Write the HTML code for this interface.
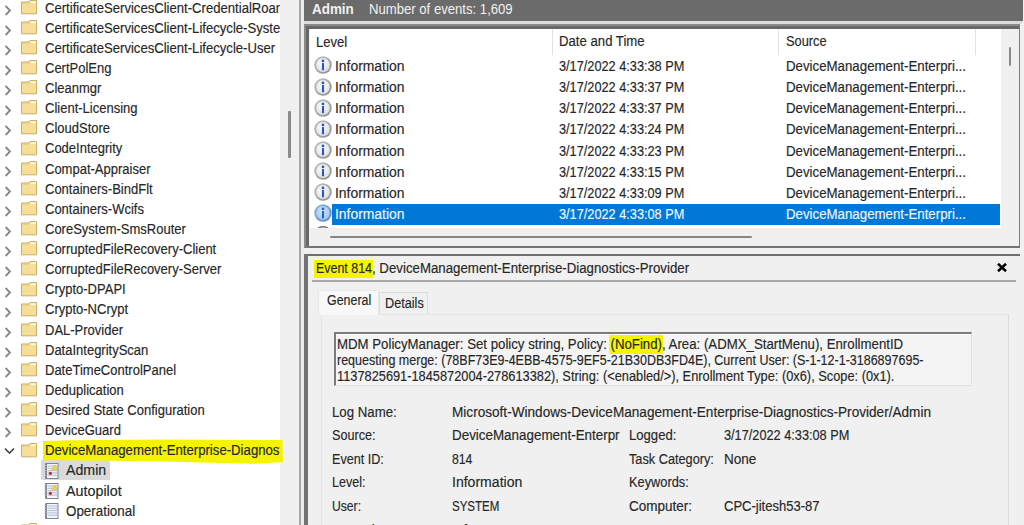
<!DOCTYPE html>
<html><head><meta charset="utf-8">
<style>
*{margin:0;padding:0;box-sizing:border-box}
html,body{width:1024px;height:525px;overflow:hidden;background:#f0f0f0;font-family:"Liberation Sans",sans-serif;font-size:14px;color:#222}
.tx{position:absolute;font-size:14px;line-height:16px;white-space:nowrap;transform-origin:0 0;color:#262626;-webkit-text-stroke:0.15px currentColor}
#tree{position:absolute;left:0;top:0;width:280px;height:525px;background:#fff;overflow:hidden}
.ti{position:absolute;left:0;width:60px;height:20px}
.ch{position:absolute;left:4px;top:5px}
.chd{position:absolute;left:3.5px;top:4px}
.fd{position:absolute;left:21px;top:0px}
.lg{position:absolute;left:44px;top:0px}
.yhl{position:absolute;left:43.7px;top:441.6px;width:238px;height:17.8px;background:#f5f500;border-radius:2px 4px 3px 2px}
.tsel{position:absolute;left:40.9px;width:69.6px;height:19.6px;background:#dadada}
#tscroll{position:absolute;left:280px;top:0;width:19px;height:525px;background:#f0f0f0}
#tthumb{position:absolute;left:288px;top:111px;width:2.6px;height:47px;background:#8a8a8a;border-radius:1px}
#vline1{position:absolute;left:298.8px;top:0;width:2px;height:525px;background:#a9a9a9}
#vline2{position:absolute;left:300.8px;top:0;width:3px;height:525px;background:#ececec}
#hdr{position:absolute;left:303.8px;top:0;width:719px;height:21.2px;background:#6b6b6b}
#hdrgap{position:absolute;left:303.8px;top:21.2px;width:718.5px;height:2.4px;background:#dcdcdc}
#lframe{position:absolute;left:303.8px;top:23.8px;width:716.2px;height:224.2px;background:#f0f0f0;border-top:2.6px solid #8a8a8a;border-left:2.6px solid #8a8a8a;border-right:1.4px solid #7a7a7a;border-bottom:2px solid #747474}
#lframe2{position:absolute;left:306.4px;top:26.4px;width:3.1px;height:219.6px;background:#686868}
#lframe3{position:absolute;left:306.4px;top:26.4px;width:712.2px;height:2.4px;background:#686868}
#list{position:absolute;left:309.5px;top:28.8px;width:691.5px;height:198.9px;background:#fff}
.colsep{position:absolute;top:28.5px;width:1px;height:26px;background:#e3e3e3}
.ei{position:absolute;left:313.8px;width:18px;height:18px}
.ii{position:absolute;left:0;top:0}
#selrow{position:absolute;left:331.6px;top:203.7px;width:668px;height:21.1px;background:#0078d7}
#evclip{position:absolute;left:0;top:0;width:1001px;height:227.7px;overflow:hidden}
#vtrack{position:absolute;left:1001px;top:28.8px;width:17.6px;height:198.9px;background:#f0f0f0}
#vthumb{position:absolute;left:1008.6px;top:47.3px;width:2.4px;height:19px;background:#8a8a8a;border-radius:1px}
#hthumb{position:absolute;left:329.5px;top:236px;width:422px;height:2.2px;background:#858585;border-radius:1px}
#dtop{position:absolute;left:303.8px;top:254.3px;width:716.2px;height:2px;background:#6f6f6f}
#dleft{position:absolute;left:303.8px;top:254.3px;width:4px;height:271px;background:#737373}
.yb{background:#f5f500;display:inline-block;line-height:18px;padding:0 2px 0 2px;margin-left:-2px;margin-right:-2px}
.yb2{background:#f5f500;display:inline-block;line-height:19px;padding:0 1px;margin:0 -1px}
#close{position:absolute;left:997px;top:263.8px}
#dsep{position:absolute;left:311.6px;top:280px;width:704.4px;height:2px;background:#a9a9a9}
#tabpanel{position:absolute;left:321px;top:313.5px;width:687.5px;height:230px;border-top:1px solid #e4e4e4;border-left:1px solid #e4e4e4;border-right:1px solid #dcdcdc;background:#f0f0f0}
#tabgen{position:absolute;left:317.5px;top:290px;width:61px;height:25px;background:#f8f8f8;border:1px solid #e8e8e8;border-bottom:none}
#tabdet{position:absolute;left:378.8px;top:291.6px;width:49.2px;height:22px;background:#f0f0f0;border:1px solid #dcdcdc;border-bottom:none}
#msg{position:absolute;left:333.8px;top:332.4px;width:638.4px;height:53.6px;background:#f4f4f4;border-top:2px solid #7c7c7c;border-left:2px solid #7c7c7c;border-right:1px solid #e2e2e2;border-bottom:1px solid #e2e2e2;box-shadow:inset 1px 1px 0 #fafafa}
#rscroll{position:absolute;left:1020px;top:0;width:4px;height:525px;background:#f0f0f0}
.tx.hd{-webkit-text-stroke:0}
</style></head><body>
<div id="tree">
<div class="ti" style="top:-0.30px"><svg class="ch" width="8" height="11" viewBox="0 0 8 11"><path d="M1.6 1 L6 5.5 L1.6 10" fill="none" stroke="#858585" stroke-width="1.8"/></svg><svg class="fd" width="16" height="15" viewBox="0 0 16 15"><path d="M0.5 2 H8 L9 0.5 H15.5 V13.8 H0.5 Z" fill="#f6de98" stroke="#c9ae6c" stroke-width="1"/><rect x="9.3" y="1.2" width="5.6" height="2" fill="#fdf5dc"/><path d="M1 3.2 H8.5 L9.3 2.7" fill="none" stroke="#e2c97e" stroke-width="0.8"/></svg></div>
<div class="ti" style="top:19.83px"><svg class="ch" width="8" height="11" viewBox="0 0 8 11"><path d="M1.6 1 L6 5.5 L1.6 10" fill="none" stroke="#858585" stroke-width="1.8"/></svg><svg class="fd" width="16" height="15" viewBox="0 0 16 15"><path d="M0.5 2 H8 L9 0.5 H15.5 V13.8 H0.5 Z" fill="#f6de98" stroke="#c9ae6c" stroke-width="1"/><rect x="9.3" y="1.2" width="5.6" height="2" fill="#fdf5dc"/><path d="M1 3.2 H8.5 L9.3 2.7" fill="none" stroke="#e2c97e" stroke-width="0.8"/></svg></div>
<div class="ti" style="top:39.96px"><svg class="ch" width="8" height="11" viewBox="0 0 8 11"><path d="M1.6 1 L6 5.5 L1.6 10" fill="none" stroke="#858585" stroke-width="1.8"/></svg><svg class="fd" width="16" height="15" viewBox="0 0 16 15"><path d="M0.5 2 H8 L9 0.5 H15.5 V13.8 H0.5 Z" fill="#f6de98" stroke="#c9ae6c" stroke-width="1"/><rect x="9.3" y="1.2" width="5.6" height="2" fill="#fdf5dc"/><path d="M1 3.2 H8.5 L9.3 2.7" fill="none" stroke="#e2c97e" stroke-width="0.8"/></svg></div>
<div class="ti" style="top:60.09px"><svg class="ch" width="8" height="11" viewBox="0 0 8 11"><path d="M1.6 1 L6 5.5 L1.6 10" fill="none" stroke="#858585" stroke-width="1.8"/></svg><svg class="fd" width="16" height="15" viewBox="0 0 16 15"><path d="M0.5 2 H8 L9 0.5 H15.5 V13.8 H0.5 Z" fill="#f6de98" stroke="#c9ae6c" stroke-width="1"/><rect x="9.3" y="1.2" width="5.6" height="2" fill="#fdf5dc"/><path d="M1 3.2 H8.5 L9.3 2.7" fill="none" stroke="#e2c97e" stroke-width="0.8"/></svg></div>
<div class="ti" style="top:80.22px"><svg class="ch" width="8" height="11" viewBox="0 0 8 11"><path d="M1.6 1 L6 5.5 L1.6 10" fill="none" stroke="#858585" stroke-width="1.8"/></svg><svg class="fd" width="16" height="15" viewBox="0 0 16 15"><path d="M0.5 2 H8 L9 0.5 H15.5 V13.8 H0.5 Z" fill="#f6de98" stroke="#c9ae6c" stroke-width="1"/><rect x="9.3" y="1.2" width="5.6" height="2" fill="#fdf5dc"/><path d="M1 3.2 H8.5 L9.3 2.7" fill="none" stroke="#e2c97e" stroke-width="0.8"/></svg></div>
<div class="ti" style="top:100.35px"><svg class="ch" width="8" height="11" viewBox="0 0 8 11"><path d="M1.6 1 L6 5.5 L1.6 10" fill="none" stroke="#858585" stroke-width="1.8"/></svg><svg class="fd" width="16" height="15" viewBox="0 0 16 15"><path d="M0.5 2 H8 L9 0.5 H15.5 V13.8 H0.5 Z" fill="#f6de98" stroke="#c9ae6c" stroke-width="1"/><rect x="9.3" y="1.2" width="5.6" height="2" fill="#fdf5dc"/><path d="M1 3.2 H8.5 L9.3 2.7" fill="none" stroke="#e2c97e" stroke-width="0.8"/></svg></div>
<div class="ti" style="top:120.48px"><svg class="ch" width="8" height="11" viewBox="0 0 8 11"><path d="M1.6 1 L6 5.5 L1.6 10" fill="none" stroke="#858585" stroke-width="1.8"/></svg><svg class="fd" width="16" height="15" viewBox="0 0 16 15"><path d="M0.5 2 H8 L9 0.5 H15.5 V13.8 H0.5 Z" fill="#f6de98" stroke="#c9ae6c" stroke-width="1"/><rect x="9.3" y="1.2" width="5.6" height="2" fill="#fdf5dc"/><path d="M1 3.2 H8.5 L9.3 2.7" fill="none" stroke="#e2c97e" stroke-width="0.8"/></svg></div>
<div class="ti" style="top:140.61px"><svg class="ch" width="8" height="11" viewBox="0 0 8 11"><path d="M1.6 1 L6 5.5 L1.6 10" fill="none" stroke="#858585" stroke-width="1.8"/></svg><svg class="fd" width="16" height="15" viewBox="0 0 16 15"><path d="M0.5 2 H8 L9 0.5 H15.5 V13.8 H0.5 Z" fill="#f6de98" stroke="#c9ae6c" stroke-width="1"/><rect x="9.3" y="1.2" width="5.6" height="2" fill="#fdf5dc"/><path d="M1 3.2 H8.5 L9.3 2.7" fill="none" stroke="#e2c97e" stroke-width="0.8"/></svg></div>
<div class="ti" style="top:160.74px"><svg class="ch" width="8" height="11" viewBox="0 0 8 11"><path d="M1.6 1 L6 5.5 L1.6 10" fill="none" stroke="#858585" stroke-width="1.8"/></svg><svg class="fd" width="16" height="15" viewBox="0 0 16 15"><path d="M0.5 2 H8 L9 0.5 H15.5 V13.8 H0.5 Z" fill="#f6de98" stroke="#c9ae6c" stroke-width="1"/><rect x="9.3" y="1.2" width="5.6" height="2" fill="#fdf5dc"/><path d="M1 3.2 H8.5 L9.3 2.7" fill="none" stroke="#e2c97e" stroke-width="0.8"/></svg></div>
<div class="ti" style="top:180.87px"><svg class="ch" width="8" height="11" viewBox="0 0 8 11"><path d="M1.6 1 L6 5.5 L1.6 10" fill="none" stroke="#858585" stroke-width="1.8"/></svg><svg class="fd" width="16" height="15" viewBox="0 0 16 15"><path d="M0.5 2 H8 L9 0.5 H15.5 V13.8 H0.5 Z" fill="#f6de98" stroke="#c9ae6c" stroke-width="1"/><rect x="9.3" y="1.2" width="5.6" height="2" fill="#fdf5dc"/><path d="M1 3.2 H8.5 L9.3 2.7" fill="none" stroke="#e2c97e" stroke-width="0.8"/></svg></div>
<div class="ti" style="top:201.00px"><svg class="ch" width="8" height="11" viewBox="0 0 8 11"><path d="M1.6 1 L6 5.5 L1.6 10" fill="none" stroke="#858585" stroke-width="1.8"/></svg><svg class="fd" width="16" height="15" viewBox="0 0 16 15"><path d="M0.5 2 H8 L9 0.5 H15.5 V13.8 H0.5 Z" fill="#f6de98" stroke="#c9ae6c" stroke-width="1"/><rect x="9.3" y="1.2" width="5.6" height="2" fill="#fdf5dc"/><path d="M1 3.2 H8.5 L9.3 2.7" fill="none" stroke="#e2c97e" stroke-width="0.8"/></svg></div>
<div class="ti" style="top:221.13px"><svg class="ch" width="8" height="11" viewBox="0 0 8 11"><path d="M1.6 1 L6 5.5 L1.6 10" fill="none" stroke="#858585" stroke-width="1.8"/></svg><svg class="fd" width="16" height="15" viewBox="0 0 16 15"><path d="M0.5 2 H8 L9 0.5 H15.5 V13.8 H0.5 Z" fill="#f6de98" stroke="#c9ae6c" stroke-width="1"/><rect x="9.3" y="1.2" width="5.6" height="2" fill="#fdf5dc"/><path d="M1 3.2 H8.5 L9.3 2.7" fill="none" stroke="#e2c97e" stroke-width="0.8"/></svg></div>
<div class="ti" style="top:241.26px"><svg class="ch" width="8" height="11" viewBox="0 0 8 11"><path d="M1.6 1 L6 5.5 L1.6 10" fill="none" stroke="#858585" stroke-width="1.8"/></svg><svg class="fd" width="16" height="15" viewBox="0 0 16 15"><path d="M0.5 2 H8 L9 0.5 H15.5 V13.8 H0.5 Z" fill="#f6de98" stroke="#c9ae6c" stroke-width="1"/><rect x="9.3" y="1.2" width="5.6" height="2" fill="#fdf5dc"/><path d="M1 3.2 H8.5 L9.3 2.7" fill="none" stroke="#e2c97e" stroke-width="0.8"/></svg></div>
<div class="ti" style="top:261.39px"><svg class="ch" width="8" height="11" viewBox="0 0 8 11"><path d="M1.6 1 L6 5.5 L1.6 10" fill="none" stroke="#858585" stroke-width="1.8"/></svg><svg class="fd" width="16" height="15" viewBox="0 0 16 15"><path d="M0.5 2 H8 L9 0.5 H15.5 V13.8 H0.5 Z" fill="#f6de98" stroke="#c9ae6c" stroke-width="1"/><rect x="9.3" y="1.2" width="5.6" height="2" fill="#fdf5dc"/><path d="M1 3.2 H8.5 L9.3 2.7" fill="none" stroke="#e2c97e" stroke-width="0.8"/></svg></div>
<div class="ti" style="top:281.52px"><svg class="ch" width="8" height="11" viewBox="0 0 8 11"><path d="M1.6 1 L6 5.5 L1.6 10" fill="none" stroke="#858585" stroke-width="1.8"/></svg><svg class="fd" width="16" height="15" viewBox="0 0 16 15"><path d="M0.5 2 H8 L9 0.5 H15.5 V13.8 H0.5 Z" fill="#f6de98" stroke="#c9ae6c" stroke-width="1"/><rect x="9.3" y="1.2" width="5.6" height="2" fill="#fdf5dc"/><path d="M1 3.2 H8.5 L9.3 2.7" fill="none" stroke="#e2c97e" stroke-width="0.8"/></svg></div>
<div class="ti" style="top:301.65px"><svg class="ch" width="8" height="11" viewBox="0 0 8 11"><path d="M1.6 1 L6 5.5 L1.6 10" fill="none" stroke="#858585" stroke-width="1.8"/></svg><svg class="fd" width="16" height="15" viewBox="0 0 16 15"><path d="M0.5 2 H8 L9 0.5 H15.5 V13.8 H0.5 Z" fill="#f6de98" stroke="#c9ae6c" stroke-width="1"/><rect x="9.3" y="1.2" width="5.6" height="2" fill="#fdf5dc"/><path d="M1 3.2 H8.5 L9.3 2.7" fill="none" stroke="#e2c97e" stroke-width="0.8"/></svg></div>
<div class="ti" style="top:321.78px"><svg class="ch" width="8" height="11" viewBox="0 0 8 11"><path d="M1.6 1 L6 5.5 L1.6 10" fill="none" stroke="#858585" stroke-width="1.8"/></svg><svg class="fd" width="16" height="15" viewBox="0 0 16 15"><path d="M0.5 2 H8 L9 0.5 H15.5 V13.8 H0.5 Z" fill="#f6de98" stroke="#c9ae6c" stroke-width="1"/><rect x="9.3" y="1.2" width="5.6" height="2" fill="#fdf5dc"/><path d="M1 3.2 H8.5 L9.3 2.7" fill="none" stroke="#e2c97e" stroke-width="0.8"/></svg></div>
<div class="ti" style="top:341.91px"><svg class="ch" width="8" height="11" viewBox="0 0 8 11"><path d="M1.6 1 L6 5.5 L1.6 10" fill="none" stroke="#858585" stroke-width="1.8"/></svg><svg class="fd" width="16" height="15" viewBox="0 0 16 15"><path d="M0.5 2 H8 L9 0.5 H15.5 V13.8 H0.5 Z" fill="#f6de98" stroke="#c9ae6c" stroke-width="1"/><rect x="9.3" y="1.2" width="5.6" height="2" fill="#fdf5dc"/><path d="M1 3.2 H8.5 L9.3 2.7" fill="none" stroke="#e2c97e" stroke-width="0.8"/></svg></div>
<div class="ti" style="top:362.04px"><svg class="ch" width="8" height="11" viewBox="0 0 8 11"><path d="M1.6 1 L6 5.5 L1.6 10" fill="none" stroke="#858585" stroke-width="1.8"/></svg><svg class="fd" width="16" height="15" viewBox="0 0 16 15"><path d="M0.5 2 H8 L9 0.5 H15.5 V13.8 H0.5 Z" fill="#f6de98" stroke="#c9ae6c" stroke-width="1"/><rect x="9.3" y="1.2" width="5.6" height="2" fill="#fdf5dc"/><path d="M1 3.2 H8.5 L9.3 2.7" fill="none" stroke="#e2c97e" stroke-width="0.8"/></svg></div>
<div class="ti" style="top:382.17px"><svg class="ch" width="8" height="11" viewBox="0 0 8 11"><path d="M1.6 1 L6 5.5 L1.6 10" fill="none" stroke="#858585" stroke-width="1.8"/></svg><svg class="fd" width="16" height="15" viewBox="0 0 16 15"><path d="M0.5 2 H8 L9 0.5 H15.5 V13.8 H0.5 Z" fill="#f6de98" stroke="#c9ae6c" stroke-width="1"/><rect x="9.3" y="1.2" width="5.6" height="2" fill="#fdf5dc"/><path d="M1 3.2 H8.5 L9.3 2.7" fill="none" stroke="#e2c97e" stroke-width="0.8"/></svg></div>
<div class="ti" style="top:402.30px"><svg class="ch" width="8" height="11" viewBox="0 0 8 11"><path d="M1.6 1 L6 5.5 L1.6 10" fill="none" stroke="#858585" stroke-width="1.8"/></svg><svg class="fd" width="16" height="15" viewBox="0 0 16 15"><path d="M0.5 2 H8 L9 0.5 H15.5 V13.8 H0.5 Z" fill="#f6de98" stroke="#c9ae6c" stroke-width="1"/><rect x="9.3" y="1.2" width="5.6" height="2" fill="#fdf5dc"/><path d="M1 3.2 H8.5 L9.3 2.7" fill="none" stroke="#e2c97e" stroke-width="0.8"/></svg></div>
<div class="ti" style="top:422.43px"><svg class="ch" width="8" height="11" viewBox="0 0 8 11"><path d="M1.6 1 L6 5.5 L1.6 10" fill="none" stroke="#858585" stroke-width="1.8"/></svg><svg class="fd" width="16" height="15" viewBox="0 0 16 15"><path d="M0.5 2 H8 L9 0.5 H15.5 V13.8 H0.5 Z" fill="#f6de98" stroke="#c9ae6c" stroke-width="1"/><rect x="9.3" y="1.2" width="5.6" height="2" fill="#fdf5dc"/><path d="M1 3.2 H8.5 L9.3 2.7" fill="none" stroke="#e2c97e" stroke-width="0.8"/></svg></div>
<div class="ti" style="top:442.56px"><svg class="chd" width="11" height="8" viewBox="0 0 11 8"><path d="M1 1.5 L5.5 6 L10 1.5" fill="none" stroke="#444" stroke-width="1.6"/></svg><svg class="fd" width="16" height="15" viewBox="0 0 16 15"><path d="M0.5 2 H8 L9 0.5 H15.5 V13.8 H0.5 Z" fill="#f6de98" stroke="#c9ae6c" stroke-width="1"/><rect x="9.3" y="1.2" width="5.6" height="2" fill="#fdf5dc"/><path d="M1 3.2 H8.5 L9.3 2.7" fill="none" stroke="#e2c97e" stroke-width="0.8"/></svg></div>
<div class="tsel" style="top:460.4px"></div>
<div class="ti" style="top:462.69px"><svg class="lg" width="15" height="16" viewBox="0 0 15 16"><rect x="2" y="0.5" width="12" height="15" fill="#f2f5fa" stroke="#7c8496" stroke-width="1"/><rect x="1" y="0.5" width="2" height="15" fill="#7a8090"/><g stroke="#a9b5c9" stroke-width="0.9"><line x1="3.5" y1="3" x2="13.5" y2="3"/><line x1="3.5" y1="5.3" x2="13.5" y2="5.3"/><line x1="3.5" y1="7.6" x2="13.5" y2="7.6"/><line x1="3.5" y1="9.9" x2="13.5" y2="9.9"/><line x1="3.5" y1="12.2" x2="13.5" y2="12.2"/></g><g stroke="#c9ccd4" stroke-width="0.8"><line x1="0" y1="2.5" x2="2.5" y2="2.5"/><line x1="0" y1="5" x2="2.5" y2="5"/><line x1="0" y1="7.5" x2="2.5" y2="7.5"/><line x1="0" y1="10" x2="2.5" y2="10"/><line x1="0" y1="12.5" x2="2.5" y2="12.5"/></g><path d="M7.8 6.6 L10.6 1.8 L13.4 6.6 Z" fill="#f3d24c" stroke="#dcb52a" stroke-width="0.5"/><circle cx="6.4" cy="10.3" r="1.6" fill="#c8262c"/></svg></div>
<div class="ti" style="top:482.82px"><svg class="lg" width="15" height="16" viewBox="0 0 15 16"><rect x="2" y="0.5" width="12" height="15" fill="#f2f5fa" stroke="#7c8496" stroke-width="1"/><rect x="1" y="0.5" width="2" height="15" fill="#7a8090"/><g stroke="#a9b5c9" stroke-width="0.9"><line x1="3.5" y1="3" x2="13.5" y2="3"/><line x1="3.5" y1="5.3" x2="13.5" y2="5.3"/><line x1="3.5" y1="7.6" x2="13.5" y2="7.6"/><line x1="3.5" y1="9.9" x2="13.5" y2="9.9"/><line x1="3.5" y1="12.2" x2="13.5" y2="12.2"/></g><g stroke="#c9ccd4" stroke-width="0.8"><line x1="0" y1="2.5" x2="2.5" y2="2.5"/><line x1="0" y1="5" x2="2.5" y2="5"/><line x1="0" y1="7.5" x2="2.5" y2="7.5"/><line x1="0" y1="10" x2="2.5" y2="10"/><line x1="0" y1="12.5" x2="2.5" y2="12.5"/></g><path d="M7.8 6.6 L10.6 1.8 L13.4 6.6 Z" fill="#f3d24c" stroke="#dcb52a" stroke-width="0.5"/><circle cx="6.4" cy="10.3" r="1.6" fill="#c8262c"/></svg></div>
<div class="ti" style="top:502.95px"><svg class="lg" width="15" height="16" viewBox="0 0 15 16"><rect x="2" y="0.5" width="12" height="15" fill="#f2f5fa" stroke="#7c8496" stroke-width="1"/><rect x="1" y="0.5" width="2" height="15" fill="#7a8090"/><g stroke="#a9b5c9" stroke-width="0.9"><line x1="3.5" y1="3" x2="13.5" y2="3"/><line x1="3.5" y1="5.3" x2="13.5" y2="5.3"/><line x1="3.5" y1="7.6" x2="13.5" y2="7.6"/><line x1="3.5" y1="9.9" x2="13.5" y2="9.9"/><line x1="3.5" y1="12.2" x2="13.5" y2="12.2"/></g><g stroke="#c9ccd4" stroke-width="0.8"><line x1="0" y1="2.5" x2="2.5" y2="2.5"/><line x1="0" y1="5" x2="2.5" y2="5"/><line x1="0" y1="7.5" x2="2.5" y2="7.5"/><line x1="0" y1="10" x2="2.5" y2="10"/><line x1="0" y1="12.5" x2="2.5" y2="12.5"/></g></svg></div>
<div class="ti" style="top:523.08px"><svg class="ch" width="8" height="11" viewBox="0 0 8 11"><path d="M1.6 1 L6 5.5 L1.6 10" fill="none" stroke="#858585" stroke-width="1.8"/></svg><svg class="fd" width="16" height="15" viewBox="0 0 16 15"><path d="M0.5 2 H8 L9 0.5 H15.5 V13.8 H0.5 Z" fill="#f6de98" stroke="#c9ae6c" stroke-width="1"/><rect x="9.3" y="1.2" width="5.6" height="2" fill="#fdf5dc"/><path d="M1 3.2 H8.5 L9.3 2.7" fill="none" stroke="#e2c97e" stroke-width="0.8"/></svg></div>
<svg width="290" height="30" style="position:absolute;left:0;top:435px"><path d="M43 6 L70 5.2 L160 4.6 L282.5 5 L283 27 L255 28.7 L150 26.3 L43 25 Z" fill="#f4f400"/></svg>
<div style="position:absolute;left:0;top:0;width:279.5px;height:525px;overflow:hidden">
<div class="tx tr" style="left:45.2px;top:0px;transform:scaleX(0.9360)">CertificateServicesClient-CredentialRoaming</div>
<div class="tx tr" style="left:45.2px;top:20px;transform:scaleX(0.9360)">CertificateServicesClient-Lifecycle-System</div>
<div class="tx tr" style="left:45.2px;top:40px;transform:scaleX(0.9360)">CertificateServicesClient-Lifecycle-User</div>
<div class="tx tr" style="left:45.2px;top:60px;transform:scaleX(0.9286)">CertPolEng</div>
<div class="tx tr" style="left:45.2px;top:80px;transform:scaleX(0.9284)">Cleanmgr</div>
<div class="tx tr" style="left:45.2px;top:100px;transform:scaleX(0.9286)">Client-Licensing</div>
<div class="tx tr" style="left:45.2px;top:120px;transform:scaleX(0.9286)">CloudStore</div>
<div class="tx tr" style="left:45.2px;top:140px;transform:scaleX(0.9285)">CodeIntegrity</div>
<div class="tx tr" style="left:45.2px;top:161px;transform:scaleX(0.9286)">Compat-Appraiser</div>
<div class="tx tr" style="left:45.2px;top:181px;transform:scaleX(0.9286)">Containers-BindFlt</div>
<div class="tx tr" style="left:45.2px;top:201px;transform:scaleX(0.9285)">Containers-Wcifs</div>
<div class="tx tr" style="left:45.2px;top:221px;transform:scaleX(0.9286)">CoreSystem-SmsRouter</div>
<div class="tx tr" style="left:45.2px;top:241px;transform:scaleX(0.9286)">CorruptedFileRecovery-Client</div>
<div class="tx tr" style="left:45.2px;top:261px;transform:scaleX(0.9286)">CorruptedFileRecovery-Server</div>
<div class="tx tr" style="left:45.2px;top:281px;transform:scaleX(0.9286)">Crypto-DPAPI</div>
<div class="tx tr" style="left:45.2px;top:301px;transform:scaleX(0.9286)">Crypto-NCrypt</div>
<div class="tx tr" style="left:45.2px;top:322px;transform:scaleX(0.9286)">DAL-Provider</div>
<div class="tx tr" style="left:45.2px;top:342px;transform:scaleX(0.9285)">DataIntegrityScan</div>
<div class="tx tr" style="left:45.2px;top:362px;transform:scaleX(0.9286)">DateTimeControlPanel</div>
<div class="tx tr" style="left:45.2px;top:382px;transform:scaleX(0.9285)">Deduplication</div>
<div class="tx tr" style="left:45.2px;top:402px;transform:scaleX(0.9285)">Desired State Configuration</div>
<div class="tx tr" style="left:45.2px;top:422px;transform:scaleX(0.9287)">DeviceGuard</div>
<div class="tx tr" style="left:45.2px;top:442px;transform:scaleX(0.9416)">DeviceManagement-Enterprise-Diagnostics-Provider</div>
<div class="tx tr" style="left:66.4px;top:462px;transform:scaleX(1.0131)">Admin</div>
<div class="tx tr" style="left:66.4px;top:483px;transform:scaleX(1.0226)">Autopilot</div>
<div class="tx tr" style="left:66.4px;top:503px;transform:scaleX(0.9556)">Operational</div>
<div class="tx tr" style="left:45.2px;top:523px;transform:scaleX(0.9286)">Diagnosis-DPS</div>
</div>
</div>
<div id="tscroll"></div>
<div style="position:absolute;left:280px;top:435px;width:5px;height:30px;overflow:hidden"><svg width="290" height="30" style="position:absolute;left:-280px;top:0"><path d="M43 6 L70 5.2 L160 4.6 L282.5 5 L283 27 L255 28.7 L150 26.3 L43 25 Z" fill="#f4f400"/></svg></div>
<div id="tthumb"></div>
<div id="vline1"></div>
<div id="vline2"></div>

<div id="rscroll"></div>
<div id="hdr"></div>
<div id="hdrgap"></div>
<div id="lframe"></div>
<div id="list"></div>
<div id="lframe2"></div>
<div id="lframe3"></div>
<div class="colsep" style="left:551.5px"></div>
<div class="colsep" style="left:777.8px"></div>
<div class="colsep" style="left:975.4px"></div>
<div id="evclip">
<div id="selrow"></div>
<div class="ei" style="top:56.40px"><svg class="ii" width="18" height="18" viewBox="0 0 18 18"><defs><linearGradient id="r0" x1="0" y1="0" x2="1" y2="1"><stop offset="0" stop-color="#c4c4c4"/><stop offset="1" stop-color="#8a8a8a"/></linearGradient><radialGradient id="g0" cx="45%" cy="40%" r="60%"><stop offset="0" stop-color="#ffffff"/><stop offset="1" stop-color="#dedede"/></radialGradient></defs><circle cx="9" cy="9" r="8.7" fill="url(#r0)"/><circle cx="9" cy="9" r="6.9" fill="url(#g0)"/><circle cx="9" cy="4.9" r="1.35" fill="#2356c8"/><rect x="7.95" y="7.1" width="2.1" height="7.2" rx="0.5" fill="#2356c8"/></svg></div>
<div class="ei" style="top:77.55px"><svg class="ii" width="18" height="18" viewBox="0 0 18 18"><defs><linearGradient id="r1" x1="0" y1="0" x2="1" y2="1"><stop offset="0" stop-color="#c4c4c4"/><stop offset="1" stop-color="#8a8a8a"/></linearGradient><radialGradient id="g1" cx="45%" cy="40%" r="60%"><stop offset="0" stop-color="#ffffff"/><stop offset="1" stop-color="#dedede"/></radialGradient></defs><circle cx="9" cy="9" r="8.7" fill="url(#r1)"/><circle cx="9" cy="9" r="6.9" fill="url(#g1)"/><circle cx="9" cy="4.9" r="1.35" fill="#2356c8"/><rect x="7.95" y="7.1" width="2.1" height="7.2" rx="0.5" fill="#2356c8"/></svg></div>
<div class="ei" style="top:98.70px"><svg class="ii" width="18" height="18" viewBox="0 0 18 18"><defs><linearGradient id="r2" x1="0" y1="0" x2="1" y2="1"><stop offset="0" stop-color="#c4c4c4"/><stop offset="1" stop-color="#8a8a8a"/></linearGradient><radialGradient id="g2" cx="45%" cy="40%" r="60%"><stop offset="0" stop-color="#ffffff"/><stop offset="1" stop-color="#dedede"/></radialGradient></defs><circle cx="9" cy="9" r="8.7" fill="url(#r2)"/><circle cx="9" cy="9" r="6.9" fill="url(#g2)"/><circle cx="9" cy="4.9" r="1.35" fill="#2356c8"/><rect x="7.95" y="7.1" width="2.1" height="7.2" rx="0.5" fill="#2356c8"/></svg></div>
<div class="ei" style="top:119.85px"><svg class="ii" width="18" height="18" viewBox="0 0 18 18"><defs><linearGradient id="r3" x1="0" y1="0" x2="1" y2="1"><stop offset="0" stop-color="#c4c4c4"/><stop offset="1" stop-color="#8a8a8a"/></linearGradient><radialGradient id="g3" cx="45%" cy="40%" r="60%"><stop offset="0" stop-color="#ffffff"/><stop offset="1" stop-color="#dedede"/></radialGradient></defs><circle cx="9" cy="9" r="8.7" fill="url(#r3)"/><circle cx="9" cy="9" r="6.9" fill="url(#g3)"/><circle cx="9" cy="4.9" r="1.35" fill="#2356c8"/><rect x="7.95" y="7.1" width="2.1" height="7.2" rx="0.5" fill="#2356c8"/></svg></div>
<div class="ei" style="top:141.00px"><svg class="ii" width="18" height="18" viewBox="0 0 18 18"><defs><linearGradient id="r4" x1="0" y1="0" x2="1" y2="1"><stop offset="0" stop-color="#c4c4c4"/><stop offset="1" stop-color="#8a8a8a"/></linearGradient><radialGradient id="g4" cx="45%" cy="40%" r="60%"><stop offset="0" stop-color="#ffffff"/><stop offset="1" stop-color="#dedede"/></radialGradient></defs><circle cx="9" cy="9" r="8.7" fill="url(#r4)"/><circle cx="9" cy="9" r="6.9" fill="url(#g4)"/><circle cx="9" cy="4.9" r="1.35" fill="#2356c8"/><rect x="7.95" y="7.1" width="2.1" height="7.2" rx="0.5" fill="#2356c8"/></svg></div>
<div class="ei" style="top:162.15px"><svg class="ii" width="18" height="18" viewBox="0 0 18 18"><defs><linearGradient id="r5" x1="0" y1="0" x2="1" y2="1"><stop offset="0" stop-color="#c4c4c4"/><stop offset="1" stop-color="#8a8a8a"/></linearGradient><radialGradient id="g5" cx="45%" cy="40%" r="60%"><stop offset="0" stop-color="#ffffff"/><stop offset="1" stop-color="#dedede"/></radialGradient></defs><circle cx="9" cy="9" r="8.7" fill="url(#r5)"/><circle cx="9" cy="9" r="6.9" fill="url(#g5)"/><circle cx="9" cy="4.9" r="1.35" fill="#2356c8"/><rect x="7.95" y="7.1" width="2.1" height="7.2" rx="0.5" fill="#2356c8"/></svg></div>
<div class="ei" style="top:183.30px"><svg class="ii" width="18" height="18" viewBox="0 0 18 18"><defs><linearGradient id="r6" x1="0" y1="0" x2="1" y2="1"><stop offset="0" stop-color="#c4c4c4"/><stop offset="1" stop-color="#8a8a8a"/></linearGradient><radialGradient id="g6" cx="45%" cy="40%" r="60%"><stop offset="0" stop-color="#ffffff"/><stop offset="1" stop-color="#dedede"/></radialGradient></defs><circle cx="9" cy="9" r="8.7" fill="url(#r6)"/><circle cx="9" cy="9" r="6.9" fill="url(#g6)"/><circle cx="9" cy="4.9" r="1.35" fill="#2356c8"/><rect x="7.95" y="7.1" width="2.1" height="7.2" rx="0.5" fill="#2356c8"/></svg></div>
<div class="ei" style="top:204.45px"><svg class="ii" width="18" height="18" viewBox="0 0 18 18"><defs><linearGradient id="r7" x1="0" y1="0" x2="1" y2="1"><stop offset="0" stop-color="#8fb8e6"/><stop offset="1" stop-color="#4f86c9"/></linearGradient><radialGradient id="g7" cx="45%" cy="40%" r="60%"><stop offset="0" stop-color="#d6e8fa"/><stop offset="1" stop-color="#9cc3ec"/></radialGradient></defs><circle cx="9" cy="9" r="8.7" fill="url(#r7)"/><circle cx="9" cy="9" r="6.9" fill="url(#g7)"/><circle cx="9" cy="4.9" r="1.35" fill="#2a62c8"/><rect x="7.95" y="7.1" width="2.1" height="7.2" rx="0.5" fill="#2a62c8"/></svg></div>
<div class="ei" style="top:225.60px"><svg class="ii" width="18" height="18" viewBox="0 0 18 18"><circle cx="9" cy="9" r="8.3" fill="none" stroke="#7a7a7a" stroke-width="1.6"/></svg></div>
</div>
<div id="vtrack"></div>
<div id="vthumb"></div>
<div id="hthumb"></div>

<div id="dtop"></div>
<div id="dleft"></div>
<svg id="close" width="10" height="9" viewBox="0 0 10 9" style="margin-top:-1px"><path d="M1 0.8 L9 8.2 M9 0.8 L1 8.2" stroke="#000" stroke-width="2.6"/></svg>
<div id="dsep"></div>
<div style="position:absolute;left:314.3px;top:260.2px;width:58.4px;height:18px;background:#f4f400"></div>
<div id="tabpanel"></div>
<div id="tabgen"></div>
<div id="tabdet"></div>
<div id="msg"></div>
<div class="tx hd" style="left:311.6px;top:1px;transform:scaleX(0.9590);font-weight:700;color:#f2f2f2">Admin</div>
<div class="tx hd" style="left:369.3px;top:1px;transform:scaleX(0.9371);color:#f2f2f2">Number of events: 1,609</div>
<div class="tx " style="left:316.4px;top:34px;transform:scaleX(0.9310)">Level</div>
<div class="tx " style="left:558.9px;top:33px;transform:scaleX(0.9407)">Date and Time</div>
<div class="tx " style="left:785.7px;top:33px;transform:scaleX(0.9164)">Source</div>
<div class="tx lst" style="left:335.1px;top:58px;transform:scaleX(0.9921)">Information</div>
<div class="tx lst" style="left:558.8px;top:58px;transform:scaleX(0.9097)">3/17/2022 4:33:38 PM</div>
<div class="tx lst" style="left:785.7px;top:58px;transform:scaleX(0.9478)">DeviceManagement-Enterpri...</div>
<div class="tx lst" style="left:335.1px;top:79px;transform:scaleX(0.9921)">Information</div>
<div class="tx lst" style="left:558.8px;top:79px;transform:scaleX(0.9097)">3/17/2022 4:33:37 PM</div>
<div class="tx lst" style="left:785.7px;top:79px;transform:scaleX(0.9478)">DeviceManagement-Enterpri...</div>
<div class="tx lst" style="left:335.1px;top:100px;transform:scaleX(0.9921)">Information</div>
<div class="tx lst" style="left:558.8px;top:100px;transform:scaleX(0.9097)">3/17/2022 4:33:37 PM</div>
<div class="tx lst" style="left:785.7px;top:100px;transform:scaleX(0.9478)">DeviceManagement-Enterpri...</div>
<div class="tx lst" style="left:335.1px;top:121px;transform:scaleX(0.9921)">Information</div>
<div class="tx lst" style="left:558.8px;top:121px;transform:scaleX(0.9097)">3/17/2022 4:33:24 PM</div>
<div class="tx lst" style="left:785.7px;top:121px;transform:scaleX(0.9478)">DeviceManagement-Enterpri...</div>
<div class="tx lst" style="left:335.1px;top:143px;transform:scaleX(0.9921)">Information</div>
<div class="tx lst" style="left:558.8px;top:143px;transform:scaleX(0.9097)">3/17/2022 4:33:23 PM</div>
<div class="tx lst" style="left:785.7px;top:143px;transform:scaleX(0.9478)">DeviceManagement-Enterpri...</div>
<div class="tx lst" style="left:335.1px;top:164px;transform:scaleX(0.9921)">Information</div>
<div class="tx lst" style="left:558.8px;top:164px;transform:scaleX(0.9097)">3/17/2022 4:33:15 PM</div>
<div class="tx lst" style="left:785.7px;top:164px;transform:scaleX(0.9478)">DeviceManagement-Enterpri...</div>
<div class="tx lst" style="left:335.1px;top:185px;transform:scaleX(0.9921)">Information</div>
<div class="tx lst" style="left:558.8px;top:185px;transform:scaleX(0.9097)">3/17/2022 4:33:09 PM</div>
<div class="tx lst" style="left:785.7px;top:185px;transform:scaleX(0.9478)">DeviceManagement-Enterpri...</div>
<div class="tx lst" style="left:335.1px;top:206px;transform:scaleX(0.9921);color:#eef6ff">Information</div>
<div class="tx lst" style="left:558.8px;top:206px;transform:scaleX(0.9097);color:#eef6ff">3/17/2022 4:33:08 PM</div>
<div class="tx lst" style="left:785.7px;top:206px;transform:scaleX(0.9478);color:#eef6ff">DeviceManagement-Enterpri...</div>
<div class="tx " style="left:315.7px;top:260px;transform:scaleX(0.8885)">Event 814</div>
<div class="tx " style="left:371.6px;top:260px;transform:scaleX(0.9477)">, DeviceManagement-Enterprise-Diagnostics-Provider</div>
<div class="tx " style="left:326.9px;top:292px;transform:scaleX(0.8880)">General</div>
<div class="tx " style="left:385.0px;top:295px;transform:scaleX(0.9053)">Details</div>
<div class="tx " style="left:337.4px;top:335px;transform:scaleX(0.9450)">MDM PolicyManager: Set policy string, Policy: <span class="yb2">(NoFind)</span>, Area: (ADMX_StartMenu), EnrollmentID</div>
<div class="tx " style="left:337.4px;top:352px;transform:scaleX(0.8930)">requesting merge: (78BF73E9-4EBB-4575-9EF5-21B30DB3FD4E), Current User: (S-1-12-1-3186897695-</div>
<div class="tx " style="left:337.4px;top:368px;transform:scaleX(0.9142)">1137825691-1845872004-278613382), String: (&lt;enabled/&gt;), Enrollment Type: (0x6), Scope: (0x1).</div>
<div class="tx " style="left:332.2px;top:404px;transform:scaleX(0.9457)">Log Name:</div>
<div class="tx " style="left:451.8px;top:404px;transform:scaleX(0.9710)">Microsoft-Windows-DeviceManagement-Enterprise-Diagnostics-Provider/Admin</div>
<div class="tx " style="left:332.2px;top:427px;transform:scaleX(0.9045)">Source:</div>
<div class="tx " style="left:451.8px;top:427px;transform:scaleX(0.9571)">DeviceManagement-Enterpr</div>
<div class="tx " style="left:628.9px;top:427px;transform:scaleX(0.9358)">Logged:</div>
<div class="tx " style="left:724.3px;top:427px;transform:scaleX(0.9097)">3/17/2022 4:33:08 PM</div>
<div class="tx " style="left:332.2px;top:451px;transform:scaleX(0.9001)">Event ID:</div>
<div class="tx " style="left:451.8px;top:451px;transform:scaleX(0.8744)">814</div>
<div class="tx " style="left:628.9px;top:451px;transform:scaleX(0.9086)">Task Category:</div>
<div class="tx " style="left:724.3px;top:451px;transform:scaleX(0.9675)">None</div>
<div class="tx " style="left:332.2px;top:474px;transform:scaleX(0.8950)">Level:</div>
<div class="tx " style="left:451.8px;top:474px;transform:scaleX(1.0036)">Information</div>
<div class="tx " style="left:628.9px;top:474px;transform:scaleX(0.9142)">Keywords:</div>
<div class="tx " style="left:332.2px;top:498px;transform:scaleX(0.8675)">User:</div>
<div class="tx " style="left:451.8px;top:498px;transform:scaleX(0.8231)">SYSTEM</div>
<div class="tx " style="left:628.9px;top:498px;transform:scaleX(0.9651)">Computer:</div>
<div class="tx " style="left:724.3px;top:498px;transform:scaleX(0.9303)">CPC-jitesh53-87</div>
<div class="tx " style="left:332.2px;top:522px;transform:scaleX(0.9643)">OpCode:</div>
<div class="tx " style="left:451.8px;top:522px;transform:scaleX(0.9643)">Info</div>
</body></html>
